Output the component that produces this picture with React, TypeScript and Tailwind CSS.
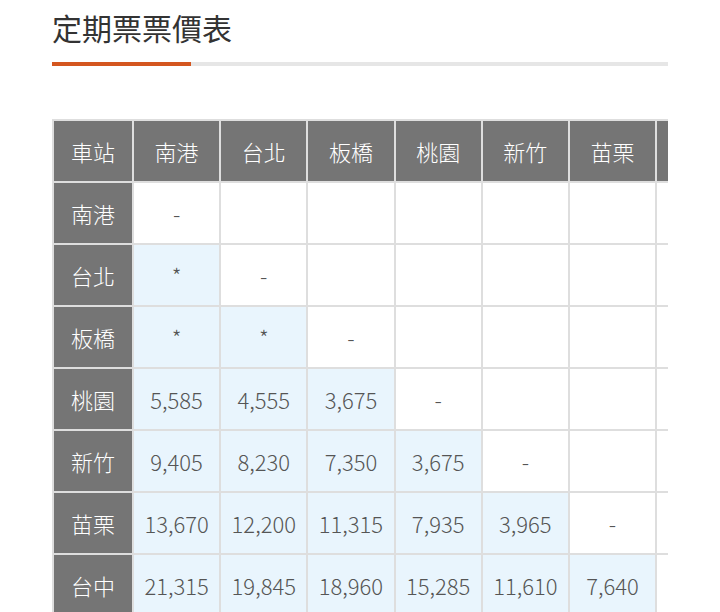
import React from "react";

const stations = ["南港", "台北", "板橋", "桃園", "新竹", "苗栗", "台中"];

const prices: (string | null)[][] = [
  [],
  ["*"],
  ["*", "*"],
  ["5,585", "4,555", "3,675"],
  ["9,405", "8,230", "7,350", "3,675"],
  ["13,670", "12,200", "11,315", "7,935", "3,965"],
  ["21,315", "19,845", "18,960", "15,285", "11,610", "7,640"],
];

const rows = ["南港", "台北", "板橋", "桃園", "新竹", "苗栗", "台中"];

export default function App() {
  const font = { fontFamily: '"Noto Sans CJK TC", "Noto Sans", sans-serif' };
  return (
    <div className="w-[720px] h-[612px] overflow-hidden bg-white" style={font}>
      <div className="pl-[52px] pr-[52px]">
        <h1 className="pt-[6px] text-[30px] leading-[42px] text-[#333] font-normal tracking-normal">定期票票價表</h1>
        <div className="mt-[14px] h-[4px] bg-[#e6e6e6] flex">
          <div className="w-[139px] h-full bg-[#d4561f]" />
        </div>
        <div className="mt-[53px] w-[616px] overflow-hidden">
          <div className="grid w-max grid-cols-[78px_repeat(7,85.2px)] auto-rows-[60px] gap-[2px] p-[2px] bg-[#dedede] text-[22px] font-light">
            <div className="bg-[#757575] text-white flex items-center justify-center">車站</div>
            {stations.map((s) => (
              <div key={s} className="bg-[#757575] text-white flex items-center justify-center">
                {s}
              </div>
            ))}
            {rows.map((r, i) => (
              <React.Fragment key={r}>
                <div className="bg-[#757575] text-white flex items-center justify-center">{r}</div>
                {stations.map((s, j) => {
                  if (j < i) {
                    return (
                      <div key={s} className="bg-[#e9f5fd] text-[#555] flex items-center justify-center">
                        {prices[i][j]}
                      </div>
                    );
                  }
                  if (j === i) {
                    return (
                      <div key={s} className="bg-white text-[#555] flex items-center justify-center">
                        -
                      </div>
                    );
                  }
                  return <div key={s} className="bg-white" />;
                })}
              </React.Fragment>
            ))}
          </div>
        </div>
      </div>
    </div>
  );
}
